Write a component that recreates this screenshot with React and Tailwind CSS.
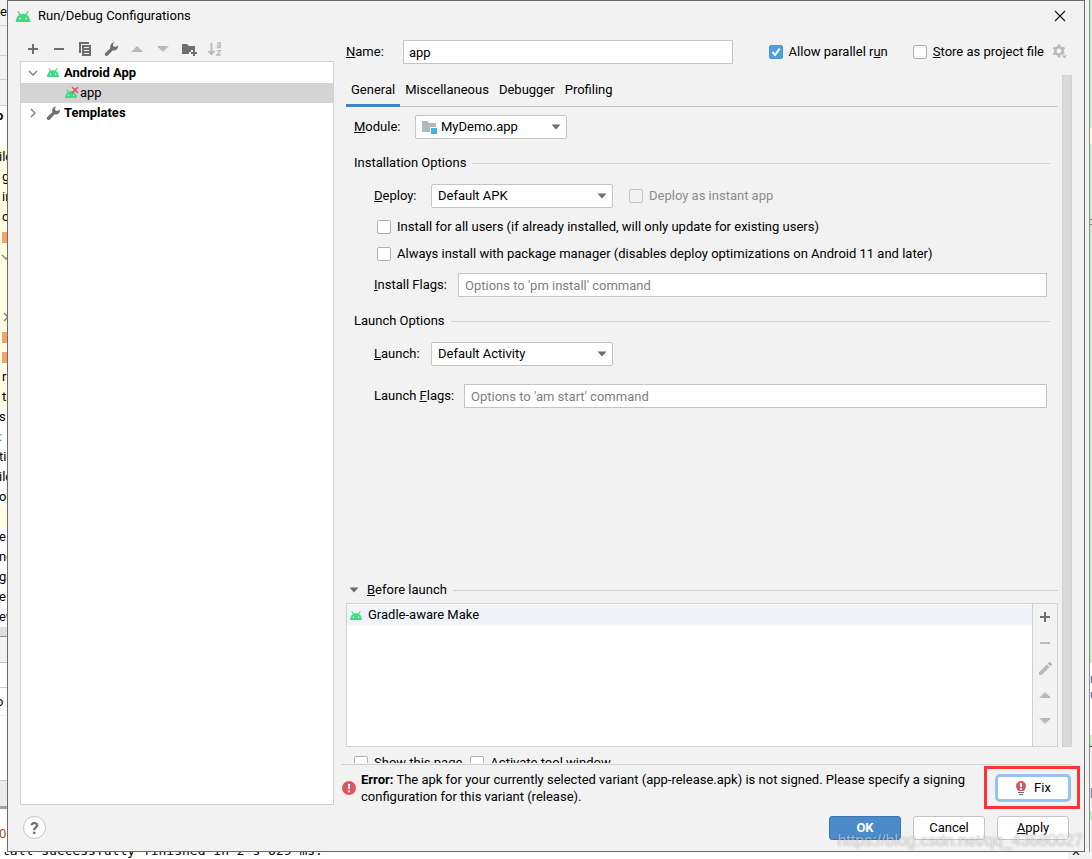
import React, { useState } from 'react';

const AndroidIcon = ({ className = 'w-3 h-[9px]' }) => (
  <svg className={className} viewBox="0 0 16 12" aria-hidden="true">
    <path d="M2.6 0.8L4.8 4M13.4 0.8L11.2 4" stroke="#3ddc84" strokeWidth="1.4" strokeLinecap="round" />
    <path d="M0 12C0.3 6.5 3.5 3 8 3S15.7 6.5 16 12Z" fill="#3ddc84" />
    <circle cx="4.5" cy="8.3" r="0.9" fill="#fff" />
    <circle cx="11.5" cy="8.3" r="0.9" fill="#fff" />
  </svg>
);

const PlusIcon = () => (
  <svg className="w-4 h-4" viewBox="0 0 16 16" fill="#6e6e6e" aria-hidden="true">
    <path d="M7 3h2v4h4v2H9v4H7V9H3V7h4z" />
  </svg>
);

const MinusIcon = ({ color = '#6e6e6e' }) => (
  <svg className="w-4 h-4" viewBox="0 0 16 16" fill={color} aria-hidden="true">
    <path d="M3 7h10v2H3z" />
  </svg>
);

const CopyIcon = () => (
  <svg className="w-4 h-4" viewBox="0 0 16 16" fill="#6e6e6e" aria-hidden="true">
    <path d="M2 1h10v2H4v9H2z" />
    <path fillRule="evenodd" d="M5 4h9v11H5zM7 6v1h5V6zM7 9v1h5V9zM7 12v1h5v-1z" />
  </svg>
);

const WrenchIcon = ({ className = 'w-4 h-4' }) => (
  <svg className={className} viewBox="0 0 16 16" fill="#6e6e6e" aria-hidden="true">
    <path d="M11.6 1.2 9.9 3.3l.5 2.3 2.3.5 2-1.8c.5 2-.1 3.6-1.4 4.5-1.1.8-2.4.9-3.6.5l-4.9 5.2c-.7.7-1.8.7-2.5.1-.7-.7-.7-1.8 0-2.5l5-4.9c-.4-1.3-.2-2.7.6-3.8 1-1.3 2.3-1.9 3.7-2.2z" />
  </svg>
);

const UpIcon = () => (
  <svg className="w-4 h-4" viewBox="0 0 16 16" fill="#b9b9b9" aria-hidden="true">
    <path d="M8 5l6 6H2z" />
  </svg>
);

const DownIcon = () => (
  <svg className="w-4 h-4" viewBox="0 0 16 16" fill="#b9b9b9" aria-hidden="true">
    <path d="M8 11L2 5h12z" />
  </svg>
);

const NewFolderIcon = () => (
  <svg className="w-4 h-4" viewBox="0 0 16 16" fill="#6e6e6e" aria-hidden="true">
    <path d="M1 3h5l2 2h6v4h-4v2H8v2H1z" />
    <path d="M12 9h2v2h2v2h-2v2h-2v-2h-2v-2h2z" />
  </svg>
);

const SortIcon = () => (
  <svg className="w-4 h-4" viewBox="0 0 16 16" fill="none" stroke="#b9b9b9" aria-hidden="true">
    <path d="M4.5 2v11M1.500 10l3 3 3-3" strokeWidth="1.8" />
    <path d="M10 2h3.2v4.5H10.5V4.300h2.700M9.800 9.700h3.400L10 14h3.800" strokeWidth="1.3" />
  </svg>
);

const PencilIcon = () => (
  <svg className="w-4 h-4" viewBox="0 0 16 16" fill="#b9b9b9" aria-hidden="true">
    <path d="M9.8 3.6l2.7 2.7L4.7 14H2v-2.7zM10.8 2.6l1.3-1.3c.4-.4.9-.4 1.3 0l1.4 1.4c.4.4.4.9 0 1.3L13.5 5.3z" />
  </svg>
);

const GearIcon = () => (
  <svg className="w-4 h-4" viewBox="0 0 16 16" aria-hidden="true">
    <circle cx="7" cy="7" r="3.7" fill="none" stroke="#b9b9b9" strokeWidth="2.6" />
    <path
      d="M7 0.5v2M7 11.5v2M1.4 3.7l1.7 1M10.9 9.3l1.2 0.7M1.4 10.3l1.7-1M10.9 4.7l1.7-1"
      stroke="#b9b9b9"
      strokeWidth="2.6"
    />
    <path d="M9 11h6.5L12.3 15z" fill="#b9b9b9" stroke="#f2f2f2" strokeWidth="0.8" />
  </svg>
);

const ChevronIcon = ({ open }) => (
  <svg className="w-3 h-3 shrink-0" viewBox="0 0 12 12" fill="none" stroke="#7f7f7f" strokeWidth="1.4" aria-hidden="true">
    <path d={open ? 'M2 4l4 4 4-4' : 'M4 2l4 4-4 4'} />
  </svg>
);

const ErrorIcon = () => (
  <svg className="w-[14px] h-[14px] shrink-0" viewBox="0 0 14 14" aria-hidden="true">
    <circle cx="7" cy="7" r="7" fill="#db5860" />
    <path d="M6 3h2v5H6zM6 9.5h2v1.8H6z" fill="#fff" />
  </svg>
);

const BulbIcon = () => (
  <svg className="w-3 h-4" viewBox="0 0 12 16" aria-hidden="true">
    <path d="M6 1a5 5 0 0 1 5 5c0 2-1 3-2 5H3C2 9 1 8 1 6a5 5 0 0 1 5-5z" fill="#db5860" />
    <path d="M5 3h2v4H5zM5 8h2v2H5z" fill="#fff" />
    <path d="M3 12h6v1H3zM4 14h4v1H4z" fill="#6e6e6e" />
  </svg>
);

const ModuleIcon = () => (
  <svg className="w-4 h-4" viewBox="0 0 16 16" aria-hidden="true">
    <path d="M1 2h5l2 2h7v4H9v5H1z" fill="#aeb9c0" />
    <path d="M10 9h6v6h-6z" fill="#40b6e0" />
  </svg>
);

const IconButton = ({ label, children }) => (
  <button type="button" aria-label={label} className="w-4 h-4 flex items-center justify-center">
    {children}
  </button>
);

const CheckBox = ({ id, defaultChecked, disabled, children }) => (
  <div className="flex items-center gap-[6px]">
    <span className="relative w-[14px] h-[14px] shrink-0">
      <input
        id={id}
        type="checkbox"
        defaultChecked={defaultChecked}
        disabled={disabled}
        className="peer block appearance-none w-[14px] h-[14px] rounded-xs border border-[#b0b0b0] bg-white checked:bg-[#4f9ee3] checked:border-[#4a93d6] disabled:bg-[#f2f2f2] disabled:border-[#c4c4c4]"
      />
      <svg
        className="absolute inset-0 w-[14px] h-[14px] hidden peer-checked:block pointer-events-none"
        viewBox="0 0 14 14"
        fill="none"
        stroke="#fff"
        strokeWidth="2"
      >
        <path d="M3.5 7.2l2.6 2.8L10.6 3.6" />
      </svg>
    </span>
    <label htmlFor={id} className={disabled ? 'text-[#8c8c8c] whitespace-nowrap' : 'whitespace-nowrap'}>
      {children}
    </label>
  </div>
);

const ComboBox = ({ id, options, icon, className }) => (
  <div className={`relative h-6 ${className}`}>
    <select
      id={id}
      className={`appearance-none w-full h-6 leading-5 rounded-xs border border-[#c4c4c4] bg-white ${
        icon ? 'pl-[25px]' : 'pl-[6px]'
      }`}
    >
      {options.map((option) => (
        <option key={option}>{option}</option>
      ))}
    </select>
    {icon && <span className="absolute left-[6px] top-1 pointer-events-none">{icon}</span>}
    <svg className="absolute right-[6px] top-[9px] w-[10px] h-[6px] pointer-events-none" viewBox="0 0 10 6">
      <path d="M0.5 0.5h9L5 5.5z" fill="#6e6e6e" />
    </svg>
  </div>
);

const SectionTitle = ({ children }) => (
  <div className="flex items-center gap-[6px] h-[18px]">
    <h2>{children}</h2>
    <div className="flex-1 border-t border-[#d1d1d1]" />
  </div>
);

const DialogButton = ({ primary, children }) => (
  <button
    type="button"
    className={`w-[72px] h-6 rounded-[3px] border ${
      primary ? 'bg-[#4c8bca] border-[#3f76b0] text-white font-bold' : 'bg-white border-[#c4c4c4]'
    }`}
  >
    {children}
  </button>
);

// Editor lines that peek out on the left of the dialog
const editorLines = [
  { text: 'ild', tint: true },
  { text: 'g', tint: true, indent: true },
  { text: 'in', tint: true, indent: true },
  { text: 'c', tint: true, indent: true },
  { mark: true, tint: true },
  { fold: 'open', tint: true },
  { tint: true },
  { tint: true },
  { fold: 'closed', tint: true },
  { mark: true, tint: true },
  { mark: true, tint: true },
  { text: 'r', tint: true, indent: true },
  { text: 'tr', tint: true, indent: true },
  { text: 's' },
  { text: ':', link: true },
  { text: 'tig' },
  { text: 'ild' },
  { text: 'og' },
  { tint: true },
  { text: 'e' },
  { text: 'nc' },
  { text: 'gr' },
  { text: 'e.' },
  { text: 'ew' },
];

const EditorLine = ({ line }) => (
  <div className={`h-5 shrink-0 flex items-center ${line.tint ? 'bg-[#ffffe4]' : ''} ${line.indent || line.mark ? 'pl-[2px]' : ''}`}>
    {line.mark && <span className="w-[6px] h-[11px] shrink-0 bg-[#f4a26c]" />}
    {line.fold && <ChevronIcon open={line.fold === 'open'} />}
    {line.text && <span className={line.indent ? '' : line.link ? '-ml-px text-[#4a86c8]' : '-ml-px'}>{line.text}</span>}
  </div>
);

const EditorLeft = () => (
  <div className="w-[7px] shrink-0 flex flex-col overflow-hidden whitespace-nowrap bg-white leading-5">
    <div className="h-[25px] shrink-0 pt-[2px] bg-[#f2f2f2]">ew</div>
    <div className="h-[30px] shrink-0 border-t border-[#d1d1d1] bg-[#f2f2f2]" />
    <div className="h-6 shrink-0 border-t border-[#d1d1d1] bg-[#f2f2f2]" />
    <div className="h-[26px] shrink-0 border-t border-[#d1d1d1] bg-[#f2f2f2]" />
    <div className="h-[42px] shrink-0 border-t border-[#d1d1d1] font-bold"><span className="-ml-1">o</span></div>
    {editorLines.map((line, i) => (
      <EditorLine key={i} line={line} />
    ))}
    <div className="h-[10px] shrink-0 border-b border-[#8c8c8c] bg-[#dfdfdf]" />
    <div className="h-[26px] shrink-0 border-b border-[#c4c4c4] bg-[#f2f2f2]" />
    <div className="h-[25px] shrink-0 border-b border-[#d1d1d1]" />
    <div className="h-[28px] shrink-0 pt-1 border-b border-[#ebebeb]"><span className="-ml-1">o</span></div>
    <div className="h-[65px] shrink-0 border-b border-[#c4c4c4]" />
    <div className="h-[25px] shrink-0 bg-[#ebebeb]" />
    <div className="h-[3px] shrink-0 bg-[#9aa7b8]" />
    <div className="flex-1 pt-[15px] text-[#a0522d]"><span className="-ml-px">0</span></div>
  </div>
);

const EditorRight = () => (
  <div className="w-[7px] shrink-0 flex overflow-hidden bg-[#f2f2f2] leading-4">
    <div className="w-1 shrink-0" />
    <div className="flex-1 flex flex-col overflow-hidden border-l border-[#8c8c8c] whitespace-nowrap">
      <div className="h-32 shrink-0 bg-[#c5ebc9]" />
      <div className="h-4 shrink-0 bg-[#fdf7dc]" />
      <div className="h-[75px] shrink-0 bg-[#c5ebc9]" />
      <div className="h-[6px] shrink-0 border-y border-[#7a8c7c] bg-[#c5ebc9]" />
      <div className="h-[438px] shrink-0 bg-[#c5ebc9]" />
      <div className="h-[72px] shrink-0 pt-2 bg-white text-[#2b63b5]">
        <div>n</div>
        <div>u</div>
      </div>
      <div className="h-3 shrink-0 bg-[#c5ebc9] border-b border-[#333]" />
      <div className="h-16 shrink-0 pt-9 text-[#4a72b0]">p</div>
      <div className="h-[9px] shrink-0 bg-[#c5ebc9]" />
      <div className="flex-1 bg-[#f2f2f2]" />
    </div>
  </div>
);

const Sidebar = () => (
  <aside className="w-[314px] shrink-0 flex flex-col">
    <div className="h-[30px] shrink-0 flex items-center gap-[10px] px-[5px] pt-[6px]">
      <IconButton label="Add"><PlusIcon /></IconButton>
      <IconButton label="Remove"><MinusIcon /></IconButton>
      <IconButton label="Copy"><CopyIcon /></IconButton>
      <IconButton label="Edit templates"><WrenchIcon /></IconButton>
      <IconButton label="Move up"><UpIcon /></IconButton>
      <IconButton label="Move down"><DownIcon /></IconButton>
      <IconButton label="New folder"><NewFolderIcon /></IconButton>
      <IconButton label="Sort"><SortIcon /></IconButton>
    </div>
    <ul className="flex-1 border border-[#d1d1d1] bg-white leading-5">
      <li className="h-[21px] pl-[6px] flex items-center font-bold">
        <ChevronIcon open />
        <AndroidIcon className="w-3 h-[9px] ml-2 mr-[5px]" />
        Android App
      </li>
      <li className="h-5 pl-11 flex items-center bg-[#d4d4d4]">
        <span className="relative mr-[3px]">
          <AndroidIcon className="w-3 h-[9px]" />
          <svg className="absolute left-[6px] -top-[3px] w-2 h-2" viewBox="0 0 8 8" stroke="#db5860" strokeWidth="1.6">
            <path d="M1 1l6 6M7 1L1 7" />
          </svg>
        </span>
        app
      </li>
      <li className="h-5 pl-[6px] flex items-center font-bold">
        <ChevronIcon />
        <WrenchIcon className="w-4 h-4 ml-[6px] mr-[3px]" />
        Templates
      </li>
    </ul>
  </aside>
);

const GeneralTab = () => (
  <div className="pl-2 pr-2 pt-2 flex flex-col">
    <div className="flex items-center">
      <label htmlFor="module" className="w-[61px]"><u>M</u>odule:</label>
      <ComboBox id="module" className="w-[152px]" icon={<ModuleIcon />} options={['MyDemo.app']} />
    </div>

    <div className="mt-[15px]"><SectionTitle>Installation Options</SectionTitle></div>
    <div className="pl-5 pr-[3px]">
      <div className="mt-3 flex items-center">
        <label htmlFor="deploy" className="w-[57px]"><u>D</u>eploy:</label>
        <ComboBox id="deploy" className="w-[182px] mr-4" options={['Default APK']} />
        <CheckBox id="instant" disabled>Deploy as instant app</CheckBox>
      </div>
      <div className="pl-[3px] mt-[10px] flex flex-col gap-[9px] leading-[18px]">
        <CheckBox id="allUsers">
          Install for all users (if already installed, will only update for existing users)
        </CheckBox>
        <CheckBox id="pkgManager">
          Always install with package manager (disables deploy optimizations on Android 11 and later)
        </CheckBox>
      </div>
      <div className="mt-[10px] flex items-center">
        <label htmlFor="installFlags" className="w-[84px] shrink-0"><u>I</u>nstall Flags:</label>
        <input
          id="installFlags"
          type="text"
          placeholder="Options to 'pm install' command"
          className="flex-1 h-6 px-[6px] border border-[#c4c4c4] bg-white placeholder-[#808080]"
        />
      </div>
    </div>

    <div className="mt-[15px]"><SectionTitle>Launch Options</SectionTitle></div>
    <div className="pl-5 pr-[3px]">
      <div className="mt-3 flex items-center">
        <label htmlFor="launch" className="w-[57px]"><u>L</u>aunch:</label>
        <ComboBox id="launch" className="w-[182px]" options={['Default Activity']} />
      </div>
      <div className="mt-[18px] flex items-center">
        <label htmlFor="launchFlags" className="w-[90px] shrink-0">Launch <u>F</u>lags:</label>
        <input
          id="launchFlags"
          type="text"
          placeholder="Options to 'am start' command"
          className="flex-1 h-6 px-[6px] border border-[#c4c4c4] bg-white placeholder-[#808080]"
        />
      </div>
    </div>
  </div>
);

const BeforeLaunch = () => (
  <div className="mt-auto flex flex-col">
    <div className="flex items-center h-[18px] pl-[3px]">
      <svg className="w-[10px] h-[6px] mr-2" viewBox="0 0 10 6" aria-hidden="true">
        <path d="M0.5 0.5h9L5 5.5z" fill="#6e6e6e" />
      </svg>
      <h2 className="mr-[6px]"><u>B</u>efore launch</h2>
      <div className="flex-1 border-t border-[#d1d1d1]" />
    </div>
    <div className="mt-1 h-36 flex border border-[#d1d1d1] bg-white">
      <ul className="flex-1 pt-px">
        <li className="h-5 pl-[3px] flex items-center gap-[6px] bg-[#f1f5fa]">
          <AndroidIcon />
          Gradle-aware Make
        </li>
      </ul>
      <div className="w-[25px] pt-[5px] flex flex-col items-center gap-[10px] border-l border-[#d1d1d1] bg-[#f2f2f2]">
        <IconButton label="Add task"><PlusIcon /></IconButton>
        <IconButton label="Remove task"><MinusIcon color="#b9b9b9" /></IconButton>
        <IconButton label="Edit task"><PencilIcon /></IconButton>
        <IconButton label="Move task up"><UpIcon /></IconButton>
        <IconButton label="Move task down"><DownIcon /></IconButton>
      </div>
    </div>
    {/* Scrolled half out of view at the bottom of the pane */}
    <div className="h-4 pl-2 pt-[7px] flex items-start gap-2 overflow-hidden leading-[18px]">
      <CheckBox id="showPage">Show this page</CheckBox>
      <CheckBox id="activateTool">Activate tool window</CheckBox>
    </div>
  </div>
);

const tabs = ['General', 'Miscellaneous', 'Debugger', 'Profiling'];

const App = () => {
  const [activeTab, setActiveTab] = useState('General');

  return (
    <div className="relative h-screen flex flex-col overflow-hidden bg-white text-black text-[13px] leading-[18px] font-['Roboto',sans-serif]">
      <div className="flex-1 min-h-0 flex">
        <EditorLeft />

        <main className="flex-1 min-w-0 flex flex-col border border-[#6b6b6b] bg-[#f2f2f2]">
          <header className="h-[30px] shrink-0 flex items-center pl-[7px] pr-[18px]">
            <AndroidIcon className="w-4 h-[11px] mr-[7px]" />
            <h1 className="flex-1">Run/Debug Configurations</h1>
            <button type="button" aria-label="Close">
              <svg className="w-3 h-3" viewBox="0 0 12 12" stroke="#1a1a1a" strokeWidth="1.2">
                <path d="M1 1l10 10M11 1L1 11" />
              </svg>
            </button>
          </header>

          <div className="flex-1 min-h-0 flex pl-3 pr-3">
            <Sidebar />

            <section className="flex-1 min-w-0 ml-[7px] flex flex-col">
              <div className="mt-[9px] pl-[5px] pr-1 flex items-center">
                <label htmlFor="name" className="w-[57px] shrink-0"><u>N</u>ame:</label>
                <input
                  id="name"
                  type="text"
                  defaultValue="app"
                  className="flex-1 min-w-0 h-6 px-[5px] border border-[#c4c4c4] bg-white mr-9"
                />
                <CheckBox id="parallel" defaultChecked>Allow parallel r<u>u</u>n</CheckBox>
                <div className="ml-[25px] mr-2">
                  <CheckBox id="store"><u>S</u>tore as project file</CheckBox>
                </div>
                <IconButton label="Storage settings"><GearIcon /></IconButton>
              </div>

              <div className="mt-[11px] flex-1 min-h-0 flex pl-[5px]">
                <div className="flex-1 min-w-0 flex flex-col overflow-hidden mr-1">
                  <nav className="h-8 shrink-0 flex border-b border-[#c4c4c4]">
                    {tabs.map((tab) => (
                      <button
                        key={tab}
                        type="button"
                        onClick={() => setActiveTab(tab)}
                        className={`h-8 px-[5px] border-b-[3px] ${
                          activeTab === tab ? 'border-[#4083c9]' : 'border-transparent'
                        }`}
                      >
                        {tab}
                      </button>
                    ))}
                  </nav>
                  <GeneralTab />
                  <BeforeLaunch />
                </div>
                <div className="w-[10px] shrink-0 mb-4 border border-[#d1d1d1] bg-[#d9d9d9]" />
              </div>

              <div className="mt-px h-[41px] shrink-0 flex items-start border-t border-[#d1d1d1]">
                <div className="flex-1 min-w-0 flex items-center gap-[5px] pl-px pt-[6px]">
                  <ErrorIcon />
                  <p className="leading-[17px] whitespace-nowrap">
                    <b>Error:</b> The apk for your currently selected variant (app-release.apk) is not signed. Please specify a signing
                    <br />
                    configuration for this variant (release).
                  </p>
                </div>
                {/* Highlight frame drawn around the Fix button */}
                <div className="relative z-10 shrink-0 mt-px -mr-2 h-[43px] pt-[5px] pl-2 pr-[6px] border-[3px] border-[#fb3535]">
                  <button
                    type="button"
                    className="w-[76px] h-7 flex items-center justify-center gap-[7px] rounded-[5px] border-[3px] border-[#97c3f3] bg-white"
                  >
                    <BulbIcon />
                    Fix
                  </button>
                </div>
              </div>
            </section>
          </div>

          <footer className="h-[46px] shrink-0 flex items-start justify-between pl-[15px] pr-[15px] pt-[11px]">
            <button
              type="button"
              aria-label="Help"
              className="w-[23px] h-[23px] rounded-full border border-[#c4c4c4] bg-white text-[17px] leading-5 font-bold text-[#6e6e6e]"
            >
              ?
            </button>
            <div className="flex gap-3">
              <DialogButton primary>OK</DialogButton>
              <DialogButton>Cancel</DialogButton>
              <DialogButton><u>A</u>pply</DialogButton>
            </div>
          </footer>
        </main>

        <EditorRight />
      </div>

      <div className="h-[7px] shrink-0 flex items-end justify-between overflow-hidden whitespace-pre bg-white pl-[2px] leading-4 font-['DejaVu_Sans_Mono',monospace]">
        <span>tall successfully finished in 2 s 629 ms.</span>
        <span className="w-6 pl-1 bg-[#f2f2f2]">x</span>
      </div>

      {/* Watermark */}
      <div className="absolute right-[9px] bottom-[6px] text-base leading-6 text-white/50 [text-shadow:0_0_2px_rgba(0,0,0,0.3)] pointer-events-none font-['Liberation_Sans',sans-serif]">
        https://blog.csdn.net/qq_43680027
      </div>
    </div>
  );
};

export default App;
